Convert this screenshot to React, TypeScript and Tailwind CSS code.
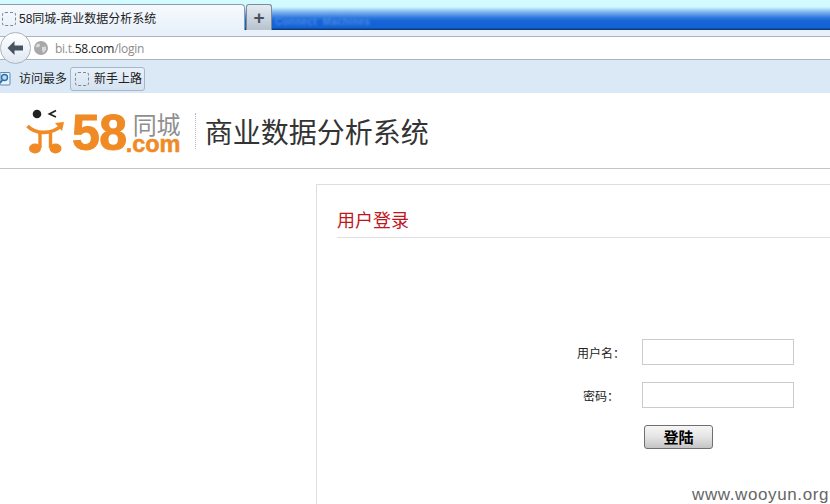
const cjk = "font-['Liberation_Sans','Noto_Sans_CJK_SC',sans-serif]";

function DashedIcon() {
  return <span className="block w-[14px] h-[14px] rounded-[3px] border border-dashed border-[#7d8894] shrink-0" />;
}

function Mascot() {
  return (
    <svg width="42" height="48" viewBox="0 0 42 48" className="shrink-0">
      <circle cx="11" cy="7" r="4.3" fill="#222" />
      <path d="M30 3.5 L23.5 7 L30 10" fill="none" stroke="#222" strokeWidth="1.8" />
      <path d="M1.5 19 C9 27 25 28 35 19" fill="none" stroke="#f08a24" strokeWidth="3.6" />
      <path d="M29 16 L38 15 L36 24 Z" fill="#f08a24" />
      <path d="M14 26 L14 41 M24.5 26 L24.5 41" stroke="#f08a24" strokeWidth="3.4" />
      <ellipse cx="9" cy="41.5" rx="6" ry="5" fill="#f08a24" />
      <ellipse cx="29.5" cy="41.5" rx="6" ry="5" fill="#f08a24" />
    </svg>
  );
}

export default function App() {
  return (
    <main className={`relative w-[830px] h-[504px] overflow-hidden bg-white text-[#222] ${cjk}`}>
      {/* Browser tab strip */}
      <div className="h-[30px] flex items-end bg-[linear-gradient(to_bottom,#d3fbff_0px,#d0f8ff_7px,#7eb3ef_12px,#2b75dc_18px,#1565d8_21px,#1462d4_28px,#0a3c80_29px,#0a3c80_30px)]">
        <div className="w-[245px] h-[26px] flex items-center gap-[3px] pl-[2px] pt-[2px] bg-gradient-to-b from-[#f6fafe] to-[#e9f1fa] border-t border-r border-[#8f9dab] rounded-tr-[4px]">
          <DashedIcon />
          <span className="text-[12px] text-[#222] leading-none">58同城-商业数据分析系统</span>
        </div>
        <div className="ml-[1px] w-[26px] h-[26px] flex items-center justify-center bg-gradient-to-b from-[#e6ebf2] to-[#b7c2cf] border border-b-0 border-[#7c8b9b] rounded-t-[3px] text-[#47525f] text-[19px] font-bold leading-none">
          +
        </div>
        <span className="ml-[3px] mb-[1px] text-[10px] font-bold text-[#4a88e2] blur-[1px] tracking-wide">Connect &nbsp;Machines</span>
      </div>

      {/* Navigation bar */}
      <div className="h-[6px] bg-[#e9f0f9]" />
      <div className="h-[24px] flex items-center bg-white border-y border-[#a9b4bc] pl-[34px]">
        <svg width="14" height="14" viewBox="0 0 14 14" className="shrink-0">
          <circle cx="7" cy="7" r="7" fill="#a8a8a8" />
          <path d="M3 3 C6 2 7 4 5.5 5.5 C4 7 2.5 6 1.5 6 M8 6 L12 5.5 L12 9 L9 12 L8 9 Z" fill="#d9d9d9" />
        </svg>
        <span className="ml-[7px] pt-[1px] text-[12px] text-[#8c8c8c] font-['Open_Sans',sans-serif] tracking-[-0.25px]">
          bi.t.<span className="text-[#222]">58.com</span>/login
        </span>
      </div>

      {/* Bookmarks bar */}
      <div className="h-[33px] flex items-center pt-[4px] bg-[#dbe8f6]">
        <svg width="13" height="14" viewBox="0 0 13 14" className="shrink-0 ml-[-1px]">
          <rect x="1" y="0.5" width="10" height="12.5" rx="1" fill="#eaf3fb" stroke="#5b8ab5" />
          <circle cx="5.5" cy="5.5" r="3" fill="#bcdcf4" stroke="#2a6ea8" strokeWidth="1.4" />
          <path d="M3.5 8 L1 11" stroke="#2a6ea8" strokeWidth="1.8" />
        </svg>
        <span className="ml-[7px] text-[12px] leading-none text-[#222]">访问最多</span>
        <div className="ml-[3px] w-[75px] h-[24px] flex items-center pl-[4px] border border-[#a5b7c9] rounded-[3px] bg-gradient-to-b from-[#e8f1fa] to-[#d5e2f0]">
          <DashedIcon />
          <span className="ml-[5px] text-[12px] leading-none text-[#222]">新手上路</span>
        </div>
      </div>

      {/* Page header */}
      <header className="h-[76px] flex items-center border-b border-[#c4c4c4] pl-[26px]">
        <Mascot />
        <div className="flex items-start mt-[5px] ml-[4px]">
          <span className="text-[50px] leading-[38px] h-[38px] font-bold text-[#f08a24] [-webkit-text-stroke:1px_#f08a24] font-['Liberation_Sans',sans-serif] tracking-[-0.5px]">58</span>
          <div className="flex flex-col ml-[-1px]">
            <span className="pl-[7px] text-[24px] leading-[24px] text-[#8f8f8f]">同城</span>
            <span className="text-[23.5px] leading-[13px] font-bold text-[#f08a24] [-webkit-text-stroke:0.5px_#f08a24] font-['Liberation_Sans',sans-serif]">.com</span>
          </div>
        </div>
        <div className="ml-[14px] h-[36px] border-l border-dotted border-[#b5b5b5]" />
        <h1 className="ml-[9px] mt-[6px] text-[28px] leading-none font-normal text-[#333]">商业数据分析系统</h1>
      </header>

      {/* Login panel */}
      <section className="ml-[316px] mt-[15px] h-[400px] border-l border-t border-[#dedede] pl-[20px] pt-[24px]">
        <h2 className="text-[18px] leading-[24px] font-normal text-[#c0161d] pb-[4px] border-b border-[#e0e0e0]">用户登录</h2>
        <div className="mt-[101px] pl-[240px]">
          <div className="flex items-center h-[26px]">
            <label className="w-[65px] pt-[3px] text-[12px] text-[#222]">用户名：</label>
            <div className="w-[152px] h-[26px] border border-[#cbcbcb] bg-white" />
          </div>
          <div className="flex items-center h-[26px] mt-[17px]">
            <label className="w-[65px] pl-[6px] pt-[3px] text-[12px] text-[#222]">密码：</label>
            <div className="w-[152px] h-[26px] border border-[#cbcbcb] bg-white" />
          </div>
          <button className="mt-[17px] ml-[67px] w-[69px] h-[24px] flex items-center justify-center rounded-[3px] border border-[#6f6f6f] bg-gradient-to-b from-[#f6f6f6] via-[#e4e4e4] to-[#c4c4c4] text-[15px] font-bold leading-none text-black">
            登陆
          </button>
        </div>
      </section>

      {/* Back button sits over the url bar */}
      <div className="absolute left-[0px] top-[32px] w-[31px] h-[32px] rounded-full border border-[#a9b4bc] bg-gradient-to-b from-white to-[#dfe8f2] flex items-center justify-center">
        <svg width="18" height="16" viewBox="0 0 18 16" className="ml-[-1px]">
          <path d="M8.5 1 L1.5 8 L8.5 15 L8.5 10.5 L17 10.5 L17 5.5 L8.5 5.5 Z" fill="#47525f" />
        </svg>
      </div>

      {/* Watermark */}
      <span className="absolute right-[1px] bottom-[0px] text-[17px] leading-[18px] tracking-[0.6px] text-[#666] font-['Liberation_Sans',sans-serif]">www.wooyun.org</span>
    </main>
  );
}
